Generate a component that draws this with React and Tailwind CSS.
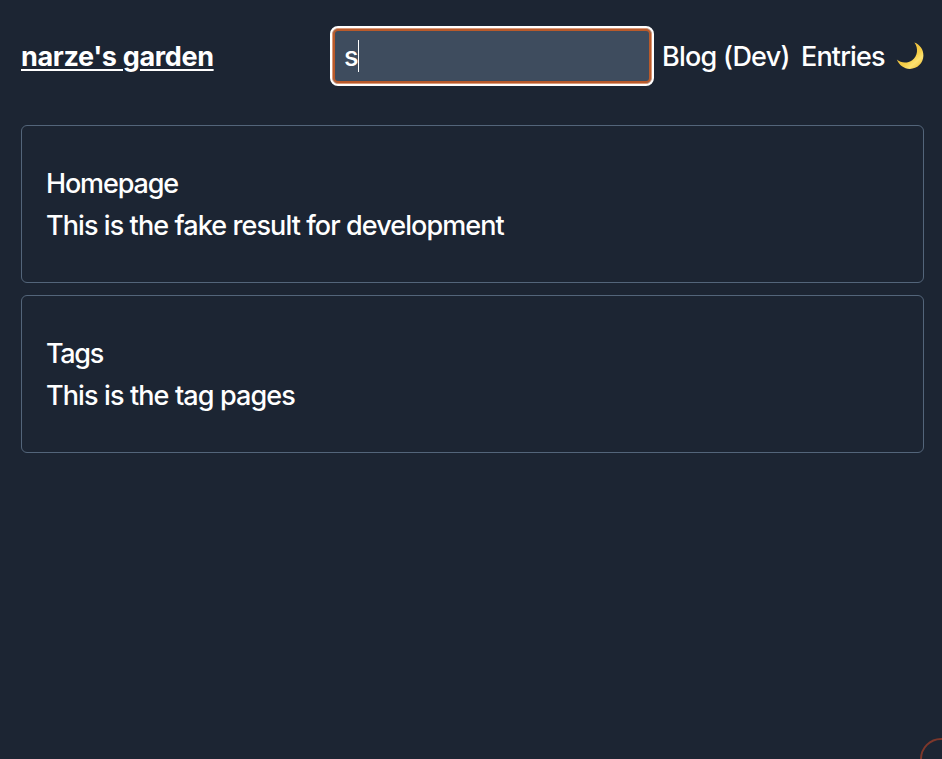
const results = [
  { title: "Homepage", text: "This is the fake result for development", titleSpacing: "tracking-[-1.15px]", textSpacing: "tracking-[-0.92px]" },
  { title: "Tags", text: "This is the tag pages", titleSpacing: "tracking-[-1.35px]", textSpacing: "tracking-[-0.88px]" },
];

function Moon() {
  return (
    <svg className="h-[28px] w-[28px]" viewBox="0 0 28 28" aria-hidden="true">
      <defs>
        <linearGradient id="moon" x1="0.2" y1="0.2" x2="0.85" y2="0.95">
          <stop offset="0" stopColor="#e9b93a" />
          <stop offset="0.55" stopColor="#f6cf48" />
          <stop offset="0.75" stopColor="#fce272" />
          <stop offset="1" stopColor="#f0c23c" />
        </linearGradient>
      </defs>
      <path
        d="M18.4 0.6 C23.8 2.5 27.6 7.7 27.4 13.8 C27.2 21.2 21.3 26.9 13.9 26.9 C8 26.9 3 23.2 0.8 17.6 C4.8 21.2 11.7 21.6 16.2 18.2 C21.8 14 22.6 6.4 18.4 0.6 Z"
        fill="url(#moon)"
      />
    </svg>
  );
}

function Header() {
  return (
    <header className="flex h-[112px] items-center">
      <a className="w-[309px] shrink-0 whitespace-nowrap pt-[2px] text-[27px] font-bold tracking-[-0.34px] underline decoration-2 underline-offset-[3px]">
        narze's garden
      </a>
      <div className="flex h-[60px] w-[324px] shrink-0 rounded-[8px] border-2 border-white bg-white">
        <div className="flex flex-1 items-center rounded-[6px] border border-[#dc9a78] bg-[#3e4c5e] pl-[11px] shadow-[inset_0_0_0_2px_#b95a2b]">
          <span className="w-[14px] pt-[2px] font-[450]">s</span>
          <span className="h-8 w-px bg-white" />
        </div>
      </div>
      <nav className="flex flex-1 items-center whitespace-nowrap pl-[8px]">
        <a className="w-[139px] shrink-0 pt-[2px] font-[450] tracking-[-0.75px]">Blog (Dev)</a>
        <a className="w-[95px] shrink-0 pt-[2px] font-[450] tracking-[-0.85px]">Entries</a>
        <Moon />
      </nav>
    </header>
  );
}

export default function App() {
  return (
    <div className="relative h-[759px] w-[942px] overflow-hidden bg-[#1c2533] pl-[21px] pr-[18px] font-['Inter',sans-serif] text-[27px] leading-[42px] text-white">
      <Header />
      <main className="mt-[13px] flex flex-col gap-3">
        {results.map((r) => (
          <section key={r.title} className="h-[158px] rounded-[6px] border border-[#53657a] pl-[24px] pt-[37px] font-[450]">
            <h2 className={r.titleSpacing}>{r.title}</h2>
            <p className={r.textSpacing}>{r.text}</p>
          </section>
        ))}
      </main>
      <div className="absolute left-[920px] top-[738px] h-[42px] w-[42px] rounded-full border-2 border-[#7d372b]" />
    </div>
  );
}
